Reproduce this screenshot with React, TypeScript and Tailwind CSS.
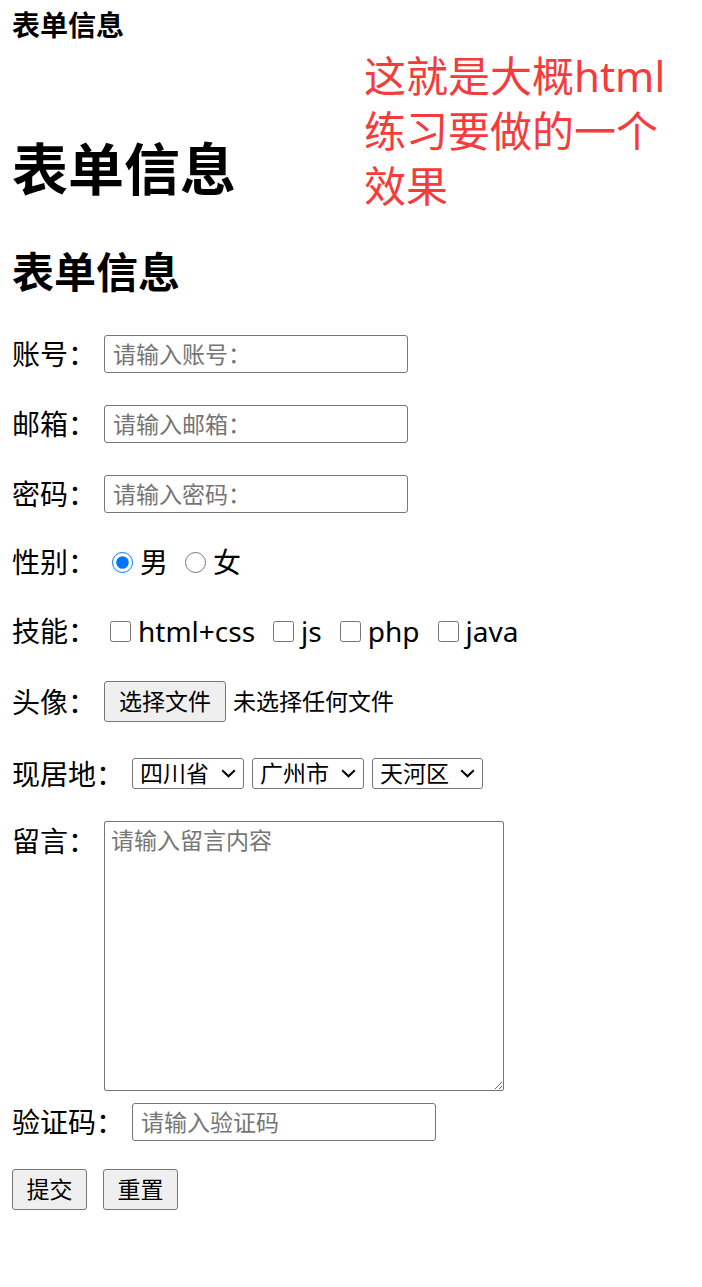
import React from "react";

const font = "font-['Noto_Sans','Noto_Sans_CJK_SC',sans-serif]";

const inputCls =
  "h-[38px] w-[304px] rounded-[3px] border border-[#767676] bg-white px-[8px] text-[23px] text-black placeholder:text-[#757575] outline-none";

const btnCls =
  "h-[41px] rounded-[3px] border border-[#767676] bg-[#efefef] px-[12px] text-[23px] text-black";

const Select = ({ options, className }: { options: string[]; className: string }) => (
  <div
    className={`flex h-[31px] items-center rounded-[3px] border border-[#767676] bg-white ${className}`}
  >
    <select className="h-full min-w-0 flex-1 appearance-none bg-transparent pl-[7px] text-[23px] leading-[29px] text-black outline-none">
      {options.map((o) => (
        <option key={o}>{o}</option>
      ))}
    </select>
    <svg width="15" height="9" viewBox="0 0 15 9" className="mr-[7px] shrink-0" fill="none">
      <path d="M1.2 1.2 7.5 7.3 13.8 1.2" stroke="#000" strokeWidth="2" />
    </svg>
  </div>
);

const App = () => {
  return (
    <div className={`relative min-h-[1287px] bg-white pl-[12px] text-black ${font}`}>
      {/* note written on the screenshot */}
      <div className="absolute left-[364px] top-[48px] text-[42px] leading-[55px] text-[#f53b3b]">
        这就是大概html
        <br />
        练习要做的一个
        <br />
        效果
      </div>

      <div className="flex h-[50px] items-center text-[28px] font-bold">表单信息</div>
      <h1 className="mt-[78px] flex h-[80px] items-center text-[56px] font-bold">表单信息</h1>
      <h2 className="mt-[33px] flex h-[60px] items-center text-[42px] font-bold">表单信息</h2>

      <form className="flex flex-col text-[28px]">
        <div className="mt-[34px] flex h-[38px] items-center">
          <span className="w-[92px]">账号：</span>
          <input className={inputCls} placeholder="请输入账号：" />
        </div>
        <div className="mt-[32px] flex h-[38px] items-center">
          <span className="w-[92px]">邮箱：</span>
          <input className={inputCls} placeholder="请输入邮箱：" />
        </div>
        <div className="mt-[32px] flex h-[38px] items-center">
          <span className="w-[92px]">密码：</span>
          <input type="password" className={inputCls} placeholder="请输入密码：" />
        </div>

        <div className="mt-[30px] flex h-[38px] items-center">
          <span className="w-[100px]">性别：</span>
          <label className="flex items-center">
            <input type="radio" name="sex" defaultChecked className="m-0 h-[21px] w-[21px]" />
            <span className="ml-[7px]">男</span>
          </label>
          <label className="ml-[17px] flex items-center">
            <input type="radio" name="sex" className="m-0 h-[21px] w-[21px]" />
            <span className="ml-[7px]">女</span>
          </label>
        </div>

        <div className="mt-[31px] flex h-[38px] items-center">
          <span className="w-[98px]">技能：</span>
          {["html+css", "js", "php", "java"].map((s, i) => (
            <label key={s} className={`flex items-center ${i > 0 ? "ml-[18px]" : ""}`}>
              <input type="checkbox" className="m-0 h-[21px] w-[21px]" />
              <span className="ml-[7px]">{s}</span>
            </label>
          ))}
        </div>

        <div className="mt-[31px] flex h-[41px] items-center">
          <span className="w-[92px]">头像：</span>
          <button type="button" className={`${btnCls} w-[122px] px-0`}>
            选择文件
          </button>
          <span className="ml-[7px] text-[23px]">未选择任何文件</span>
        </div>

        <div className="mt-[36px] flex h-[31px] items-center">
          <span className="w-[120px]">现居地：</span>
          <Select options={["四川省", "广东省"]} className="w-[112px]" />
          <Select options={["广州市", "成都市"]} className="ml-[8px] w-[112px]" />
          <Select options={["天河区", "越秀区"]} className="ml-[8px] w-[111px]" />
        </div>

        <div className="mt-[32px] flex items-start">
          <span className="w-[92px] leading-[40px]">留言：</span>
          <textarea
            className="h-[270px] w-[400px] rounded-[2px] border border-[#767676] bg-white px-[6px] py-[1px] text-[23px] text-black placeholder:text-[#757575] outline-none"
            placeholder="请输入留言内容"
          />
        </div>

        <div className="mt-[12px] flex h-[37px] items-center">
          <span className="w-[120px]">验证码：</span>
          <input className={`${inputCls} h-[37px]`} placeholder="请输入验证码" />
        </div>

        <div className="mt-[29px] flex items-center gap-[16px]">
          <button type="submit" className={`${btnCls} w-[75px] px-0`}>
            提交
          </button>
          <button type="reset" className={`${btnCls} w-[75px] px-0`}>
            重置
          </button>
        </div>
      </form>
    </div>
  );
};

export default App;
